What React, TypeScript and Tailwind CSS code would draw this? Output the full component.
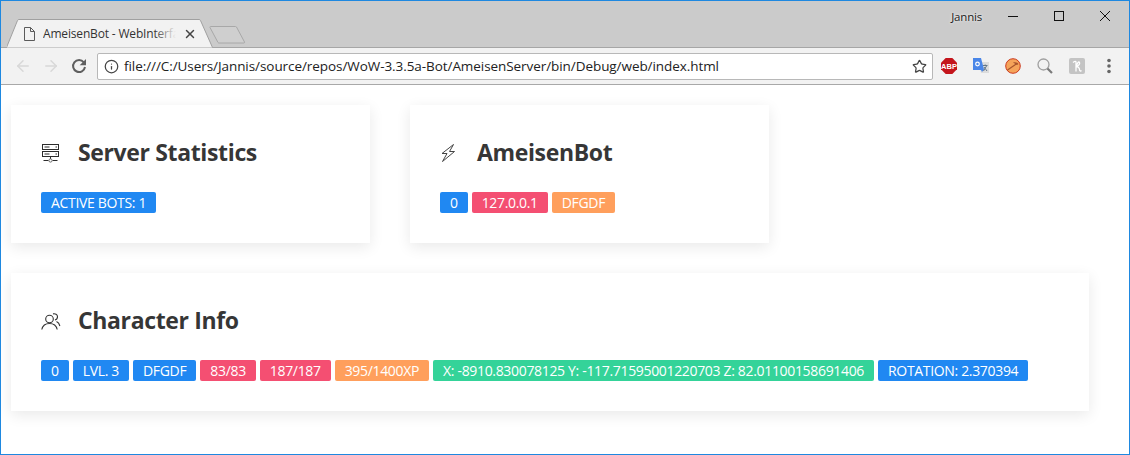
import { ArrowLeft, ArrowRight, Info, Star, X } from 'lucide-react';
import type { ReactNode } from 'react';

const blue = 'bg-[#2088f2]';
const red = 'bg-[#f44f72]';
const orange = 'bg-[#ff9f5c]';
const green = 'bg-[#34d399]';

function Badge({ color, children }: { color: string; children: ReactNode }) {
  return (
    <span className={`${color} h-[21px] px-[10px] rounded-[2px] text-white text-[14px] tracking-[-0.33px] leading-[21px] whitespace-nowrap`}>
      {children}
    </span>
  );
}

function Card({ icon, title, className, children }: { icon: ReactNode; title: string; className: string; children: ReactNode }) {
  return (
    <div className={`${className} h-[138px] bg-white px-[30px] pt-[30px] shadow-[0_4px_14px_rgba(0,0,0,0.09)]`}>
      <div className="h-[36px] flex items-center">
        <div className="w-[37px] flex items-center">{icon}</div>
        <h2 className="text-[23px] font-bold text-[#363636] tracking-[-0.36px] -translate-y-[1px]">{title}</h2>
      </div>
      <div className="flex gap-[4px] mt-[21px]">{children}</div>
    </div>
  );
}

function ServerIcon() {
  return (
    <svg width="20" height="20" viewBox="0 0 20 20" fill="none" stroke="#2c2c2c" strokeWidth="1">
      <rect x="1.500" y="1.500" width="16" height="5" />
      <rect x="1.500" y="8.500" width="16" height="5" />
      <path d="M3.500 4h5M3.500 11h5M14.500 4h1.500M14.500 11h1.500M9.500 13.500v2.500M2.500 17.500h5M11.500 17.500h5" />
      <circle cx="9.500" cy="17.500" r="1.600" stroke="#666" />
    </svg>
  );
}

function BoltIcon() {
  return (
    <svg width="16" height="18" viewBox="0 0 16 18" fill="none" stroke="#444" strokeWidth="1">
      <path d="M13.500 .5 2 9.500h5L2.500 17.500 14.500 7.500H9.500L13.500 .5z" />
    </svg>
  );
}

function UsersIcon() {
  return (
    <svg width="20" height="17" viewBox="0 0 20 17" fill="none" stroke="#333" strokeWidth="1.100">
      <circle cx="8.500" cy="6" r="3.800" />
      <path d="M.8 16.500c.8-3.800 3.500-6 7.700-6s6.900 2.200 7.700 6M12 .9c2.200-.5 4.500.5 4.500 2.800 0 1.800-1 2.800-2.500 3.300M15.500 8.500c1.700.8 2.800 2.200 3.400 4.500" />
    </svg>
  );
}

function FileIcon() {
  return (
    <svg width="11" height="14" viewBox="0 0 11 14" fill="none" stroke="#5a5a5a" strokeWidth="1">
      <path d="M.5 .5h6l4 4v9H.5zM6.500 .5v4h4" />
    </svg>
  );
}

function TabShape() {
  return (
    <svg className="absolute left-0 top-0" width="240" height="29" viewBox="0 0 240 29" fill="none">
      <path d="M-7 28.500H-.5L10.500 1.500c.3-.7.800-1 1.500-1h180c.7 0 1.200.3 1.500 1L205.500 28.500" fill="#f2f2f2" stroke="#a0a0a0" />
      <path d="M203.500 7.500h25c.5 0 .8.2 1 .5l8 15c.3.5 0 1-.5 1H212c-.5 0-.8-.2-1-.5l-8-15c-.3-.5 0-1 .5-1z" stroke="#a8a8a8" fill="#cfcfcf" />
    </svg>
  );
}

function ReloadIcon() {
  return (
    <svg width="16" height="16" viewBox="0 0 16 16" fill="none">
      <path d="M12.800 4.300A6 6 0 1 0 14 9" stroke="#5f5f5f" strokeWidth="2" />
      <path d="M15 1v6.300H8.700z" fill="#5f5f5f" />
    </svg>
  );
}

function Extensions() {
  return (
    <div className="flex items-center gap-[16px] ml-[8px]">
      <svg width="16" height="16" viewBox="0 0 16 16">
        <path d="M4.700 0h6.600L16 4.700v6.600L11.300 16H4.700L0 11.300V4.700z" fill="#c4151c" />
        <text x="8" y="11" textAnchor="middle" fontSize="7.500" fontWeight="700" fill="#fff" fontFamily="Liberation Sans, sans-serif">ABP</text>
      </svg>
      <svg width="16" height="16" viewBox="0 0 16 16">
        <path d="M6 4h10v11H8z" fill="#dcdcdc" />
        <path d="M0 0h8l3 11.500-2 2.500-1-2H0z" fill="#4a86e8" />
        <circle cx="4.500" cy="6" r="1.800" fill="none" stroke="#fff" strokeWidth="1.200" />
        <path d="M10 7.500h4.500M12.200 6.500v1M10.500 13l3-5M11 9l3 4" stroke="#64788a" strokeWidth="1" fill="none" />
      </svg>
      <svg width="16" height="16" viewBox="0 0 16 16">
        <circle cx="8" cy="8" r="7.300" fill="#f5a45a" stroke="#cc3a1e" strokeWidth="1" />
        <path d="M2.500 12 12 5.500" stroke="#a8552c" strokeWidth="1.200" fill="none" />
        <path d="M8 4.500c2-.8 4-.3 5.500 1.500L12 7z" fill="#a8552c" />
      </svg>
      <svg width="16" height="16" viewBox="0 0 16 16" fill="none">
        <circle cx="6.500" cy="6.500" r="5.500" stroke="#a0a0a0" strokeWidth="1.300" />
        <path d="M10.500 10.500 15 15" stroke="#7a7a7a" strokeWidth="2.200" />
      </svg>
      <div className="w-[16px] h-[16px] rounded-[2px] bg-[#c4c4c4] flex items-center justify-center">
        <svg width="10" height="13" viewBox="0 0 10 13" fill="none" stroke="#fff" strokeWidth="1.300">
          <path d="M1 2.500C2.500 1 4 1 4 2v9.500M4 7c2-1 4-3 3.500-4.500C6.800 1 5 3 4.500 6.500c1.500 0 3 1.500 3 3 0 1.500 1 2 2 1" />
        </svg>
      </div>
      <svg width="16" height="16" viewBox="0 0 16 16" fill="#666">
        <circle cx="8" cy="2.500" r="1.800" />
        <circle cx="8" cy="8" r="1.800" />
        <circle cx="8" cy="13.500" r="1.800" />
      </svg>
    </div>
  );
}

export default function App() {
  return (
    <div className="w-[1130px] h-[455px] overflow-hidden border border-[#1e88e0] bg-white font-['Open_Sans','Noto_Sans',sans-serif]">
      {/* Title bar + tabs */}
      <div className="h-[47px] bg-[#cbcbcb] border-b border-[#a6a6a6] relative flex">
        <div className="absolute left-[6px] top-[18px] w-[240px] h-[29px]">
          <TabShape />
          <div className="absolute left-[17px] top-[7px] w-[180px] flex items-center">
            <FileIcon />
            <span className="relative ml-[8px] w-[133px] h-[16px] overflow-hidden whitespace-nowrap text-[12px] leading-[16px] text-[#333] tracking-[-0.17px]">
              AmeisenBot - WebInterface
              <span className="absolute right-0 top-0 w-[22px] h-[16px] bg-gradient-to-r from-transparent to-[#f2f2f2]" />
            </span>
            <X className="w-[14px] h-[14px] ml-[7px] text-[#444]" strokeWidth={2.500} />
          </div>
        </div>
        <div className="ml-auto h-[29px] flex items-center">
          <span className="text-[11.500px] text-[#222] [text-shadow:0_0_3px_#fff] tracking-[-0.2px] mr-[8px] translate-y-[1px]">Jannis</span>
          <div className="w-[46px] flex justify-center">
            <svg width="10" height="10" viewBox="0 0 10 10" stroke="#111"><path d="M0 5.500h10" /></svg>
          </div>
          <div className="w-[46px] flex justify-center">
            <svg width="10" height="10" viewBox="0 0 10 10" fill="none" stroke="#111"><rect x=".5" y=".5" width="9" height="9" /></svg>
          </div>
          <div className="w-[46px] flex justify-center mr-[1px]">
            <svg width="10" height="10" viewBox="0 0 10 10" stroke="#111"><path d="M0 0 10 10M10 0 0 10" /></svg>
          </div>
        </div>
      </div>

      {/* Toolbar */}
      <div className="h-[37px] bg-[#f2f2f2] border-b border-[#a8a8a8] flex items-center pl-[13px]">
        <ArrowLeft className="w-[18px] h-[18px] text-[#d8d8d8]" strokeWidth={2} />
        <ArrowRight className="w-[18px] h-[18px] text-[#d8d8d8] ml-[10px]" strokeWidth={2} />
        <div className="ml-[11px] flex items-center"><ReloadIcon /></div>
        <div className="w-[836px] h-[27px] ml-[10px] bg-white border border-[#b8b8b8] rounded-[2px] flex items-center pl-[6px] pr-[5px]">
          <Info className="w-[15px] h-[15px] text-[#444]" strokeWidth={2} />
          <span className="ml-[5px] text-[13.500px] text-[#222] tracking-[-0.067px] whitespace-nowrap">file:///C:/Users/Jannis/source/repos/WoW-3.3.5a-Bot/AmeisenServer/bin/Debug/web/index.html</span>
          <Star className="w-[15px] h-[15px] ml-auto text-[#444]" strokeWidth={2} />
        </div>
        <Extensions />
      </div>

      {/* Page */}
      <div className="pl-[10px] pt-[20px]">
        <div className="flex gap-[40px]">
          <Card className="w-[359px]" icon={<ServerIcon />} title="Server Statistics">
            <Badge color={blue}>ACTIVE BOTS: 1</Badge>
          </Card>
          <Card className="w-[359px]" icon={<BoltIcon />} title="AmeisenBot">
            <Badge color={blue}>0</Badge>
            <Badge color={red}>127.0.0.1</Badge>
            <Badge color={orange}>DFGDF</Badge>
          </Card>
        </div>
        <Card className="w-[1078px] mt-[30px]" icon={<UsersIcon />} title="Character Info">
          <Badge color={blue}>0</Badge>
          <Badge color={blue}>LVL. 3</Badge>
          <Badge color={blue}>DFGDF</Badge>
          <Badge color={red}>83/83</Badge>
          <Badge color={red}>187/187</Badge>
          <Badge color={orange}>395/1400XP</Badge>
          <Badge color={green}>X: -8910.830078125 Y: -117.71595001220703 Z: 82.01100158691406</Badge>
          <Badge color={blue}>ROTATION: 2.370394</Badge>
        </Card>
      </div>
    </div>
  );
}
